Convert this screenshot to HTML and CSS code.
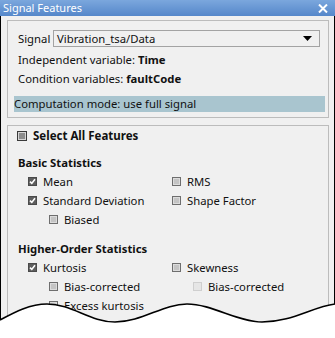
FILE: index.html
```html
<!DOCTYPE html>
<html>
<head>
<meta charset="utf-8">
<link rel="stylesheet" href="styles.css">
</head>
<body>
<div class="window">
  <div class="titlebar">
    <span class="title">Signal Features</span>
    <svg class="close" width="10" height="9" viewBox="0 0 10 9"><path d="M1 0.5 L9 8.5 M9 0.5 L1 8.5" stroke="#fff" stroke-width="2"/></svg>
  </div>
  <div class="client">
    <div class="panel panel-top">
      <div class="signal-row">
        <span class="signal-label">Signal</span>
        <div class="select">
          <span>Vibration_tsa/Data</span>
          <svg class="arrow" width="9" height="5" viewBox="0 0 9 5"><path d="M0 0 H9 L4.5 5 Z" fill="#000"/></svg>
        </div>
      </div>
      <div class="info">Independent variable: <b>Time</b></div>
      <div class="info">Condition variables: <b>faultCode</b></div>
      <div class="mode">Computation mode: use full signal</div>
    </div>
    <div class="panel panel-features">
      <div class="select-all"><span class="cb cb-mixed"></span><b>Select All Features</b></div>
      <div class="heading">Basic Statistics</div>
      <div class="grid">
        <div class="item"><span class="cb cb-on"><svg width="7" height="7" viewBox="0 0 7 7"><path d="M1 3.6 L2.8 5.4 L6 1.2" stroke="#fff" stroke-width="1.6" fill="none"/></svg></span>Mean</div>
        <div class="item"><span class="cb"></span>RMS</div>
        <div class="item"><span class="cb cb-on"><svg width="7" height="7" viewBox="0 0 7 7"><path d="M1 3.6 L2.8 5.4 L6 1.2" stroke="#fff" stroke-width="1.6" fill="none"/></svg></span>Standard Deviation</div>
        <div class="item"><span class="cb"></span>Shape Factor</div>
        <div class="item sub"><span class="cb"></span>Biased</div>
        <div class="item"></div>
      </div>
      <div class="heading heading-2">Higher-Order Statistics</div>
      <div class="grid">
        <div class="item"><span class="cb cb-on"><svg width="7" height="7" viewBox="0 0 7 7"><path d="M1 3.6 L2.8 5.4 L6 1.2" stroke="#fff" stroke-width="1.6" fill="none"/></svg></span>Kurtosis</div>
        <div class="item"><span class="cb"></span>Skewness</div>
        <div class="item sub"><span class="cb"></span>Bias-corrected</div>
        <div class="item sub"><span class="cb cb-off"></span>Bias-corrected</div>
        <div class="item sub"><span class="cb"></span>Excess kurtosis</div>
        <div class="item"></div>
      </div>
    </div>
  </div>
  <svg class="tear" width="335" height="338" viewBox="0 0 335 338">
    <path d="M0 320 C 15 312 30 304 47 304 C 72 304 90 322 115 322 C 142 322 163 304 187 304 C 212 304 238 322 262 322 C 292 322 312 307 335 304 L 335 338 L 0 338 Z" fill="#fff"/>
    <path d="M0 320 C 15 312 30 304 47 304 C 72 304 90 322 115 322 C 142 322 163 304 187 304 C 212 304 238 322 262 322 C 292 322 312 307 335 304" fill="none" stroke="#000" stroke-width="1.6"/>
  </svg>
</div>
</body>
</html>
```

FILE: styles.css
```css
* { box-sizing: border-box; }
html, body { margin: 0; padding: 0; }
body {
  background: #fff;
  width: 335px;
  height: 338px;
  overflow: hidden;
  font-family: "Noto Sans", "Open Sans", sans-serif;
  font-size: 11.3px;
  color: #111;
}
.window {
  position: relative;
  width: 335px;
  height: 338px;
  background: #f0f0f0;
}
.titlebar {
  height: 16px;
  background: linear-gradient(#7ba7dd, #5587ca);
  color: #fff;
  display: flex;
  align-items: center;
  justify-content: space-between;
  padding: 0 7px 0 3px;
}
.title { font-size: 11px; line-height: 16px; }
.close { display: block; }
.client {
  height: 322px;
  border-left: 1px solid #000;
  border-right: 1px solid #000;
  padding: 4px 0 0 6px;
}
.panel {
  width: 322px;
  border: 1px solid #bcbcbc;
}
.panel-top { padding: 9px 0 5px 10px; }
.signal-row { display: flex; align-items: center; height: 17px; }
.signal-label { width: 35px; line-height: 17px; }
.select {
  width: 267px;
  height: 17px;
  border: 1px solid #a3a3a3;
  background: #f0f0f0;
  display: flex;
  align-items: center;
  justify-content: space-between;
  padding: 0 7px 0 3px;
  line-height: 15px;
}
.arrow { display: block; }
.info { margin-top: 3px; line-height: 19px; height: 19px; }
.info + .info { margin-top: 0; }
.info b { font-weight: 700; }
.mode {
  margin-top: 8px;
  margin-left: -4px;
  width: 311px;
  height: 16px;
  line-height: 16px;
  background: #a9c5cf;
}
.panel-features {
  margin-top: 7px;
  height: 200px;
  padding: 0 0 0 9px;
}
.select-all {
  display: flex;
  align-items: center;
  gap: 6px;
  height: 19px;
  font-size: 11.5px;
}
.heading {
  margin-top: 8px;
  padding-left: 1px;
  height: 19px;
  line-height: 19px;
  font-weight: 700;
}
.heading-2 { margin-top: 10px; }
.grid {
  display: grid;
  grid-template-columns: 144px 1fr;
  padding-left: 11px;
}
.item {
  display: flex;
  align-items: center;
  gap: 6px;
  height: 19px;
}
.item.sub { padding-left: 21px; }
.cb {
  width: 9px;
  height: 9px;
  flex: none;
  border: 1px solid #6e6e6e;
  background: #c4c4c4;
  box-shadow: inset 0 0 0 1px #dcdcdc;
  display: flex;
  align-items: center;
  justify-content: center;
}
.cb-on {
  background: #5e5e5e;
  border-color: #4a4a4a;
  box-shadow: none;
}
.cb-on svg { display: block; }
.cb-off {
  border-color: #cfcfcf;
  background: #e6e6e6;
  box-shadow: none;
}
.cb-mixed {
  width: 10px;
  height: 10px;
  border-color: #3a3a3a;
  background: #8c8c8c;
  box-shadow: inset 0 0 0 1px #d6d6d6;
}
.tear {
  position: absolute;
  left: 0;
  top: 0;
  pointer-events: none;
}
```
